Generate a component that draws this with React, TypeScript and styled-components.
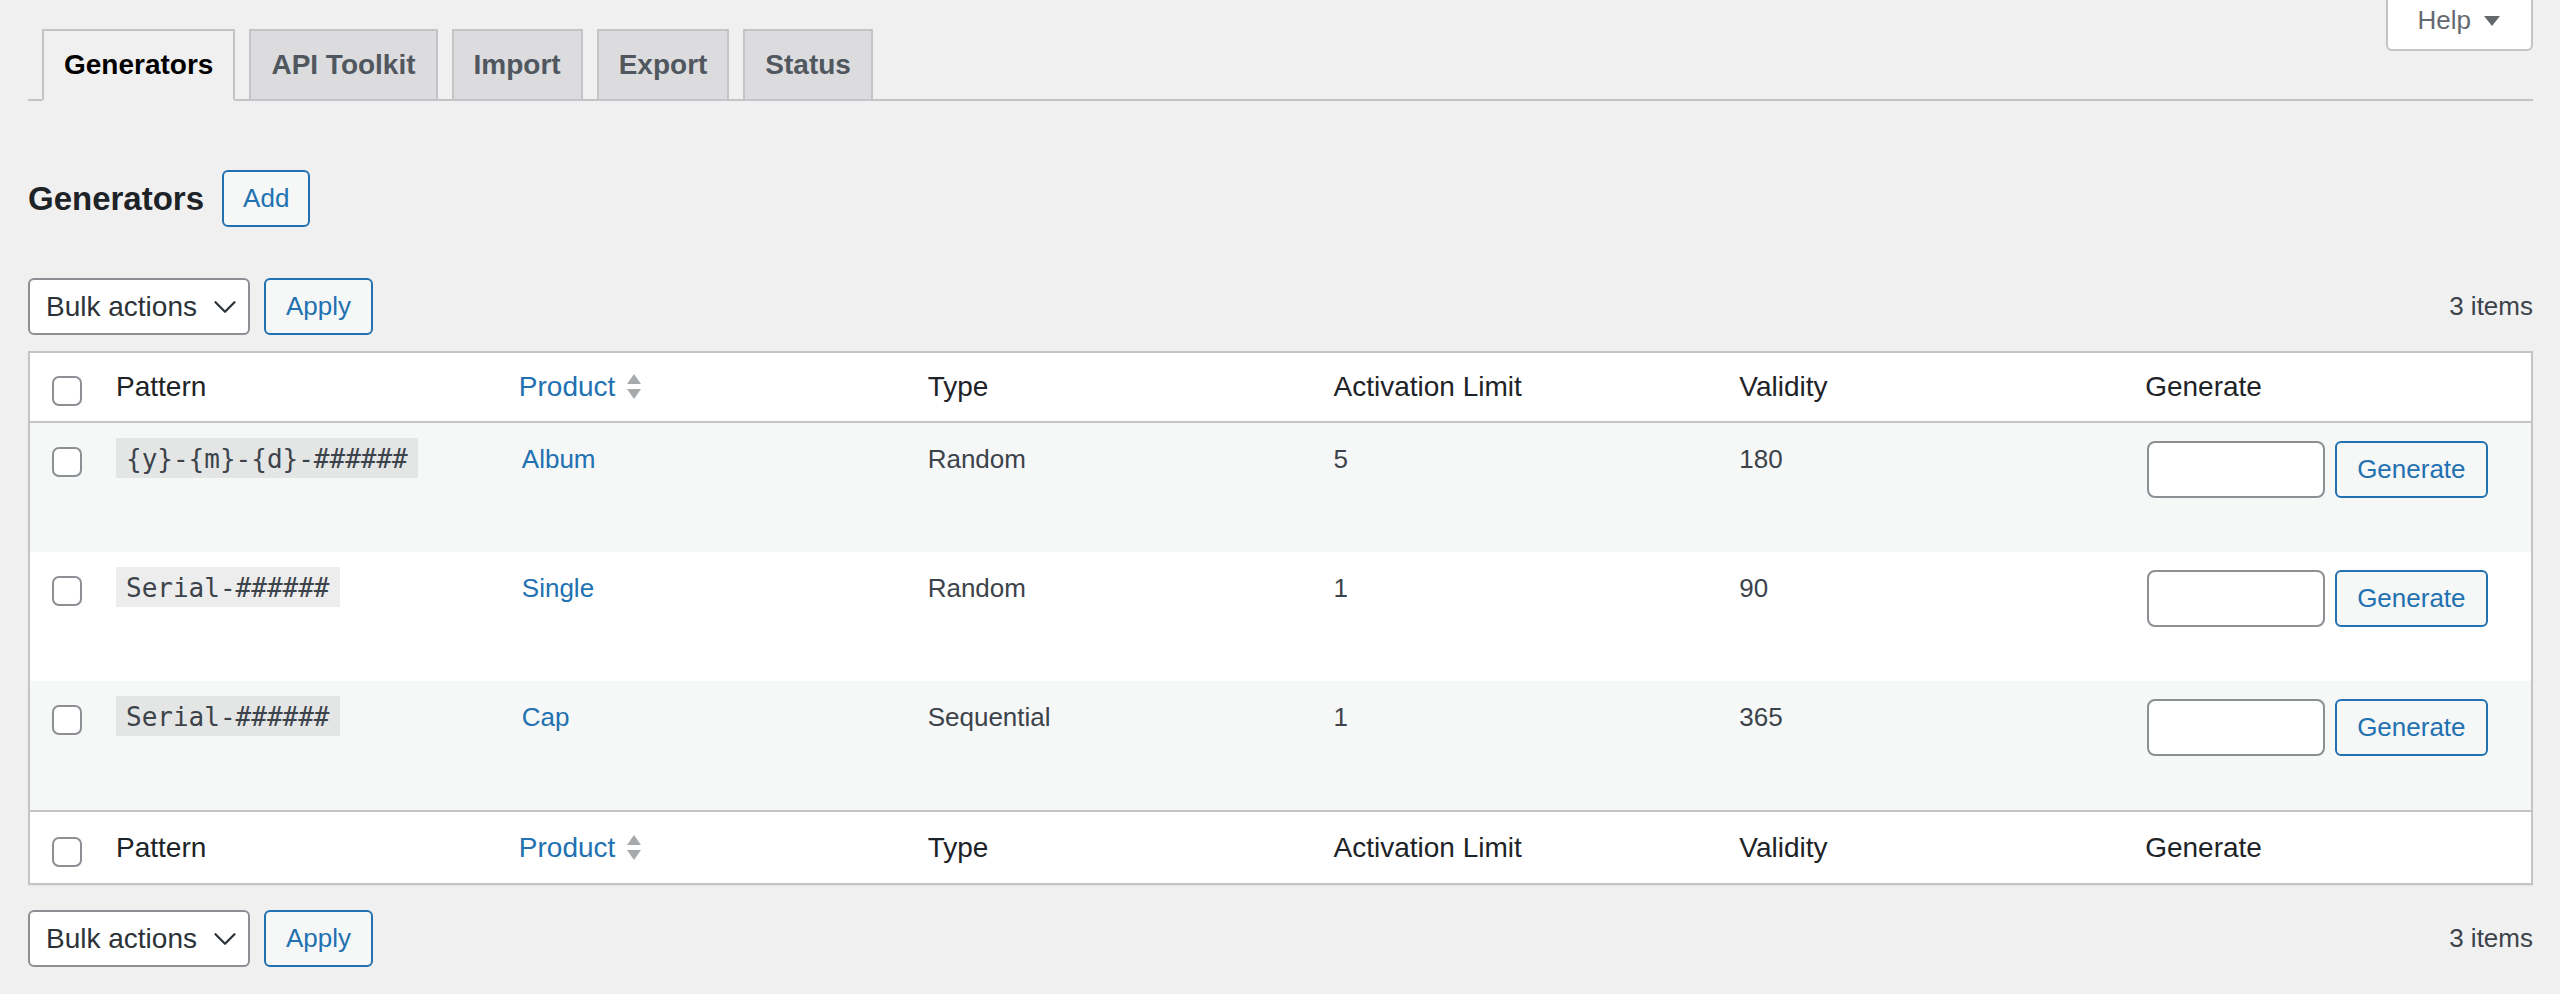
import React from 'react';
import styled, { createGlobalStyle } from 'styled-components';
import { ChevronDown } from 'lucide-react';

const GlobalStyle = createGlobalStyle`
  body {
    margin: 0;
    background: #f0f0f1;
    color: #3c434a;
    font-family: "Liberation Sans", Arial, sans-serif;
  }
`;

const Wrap = styled.div`
  padding: 0 27px 40px 28px;
`;

const HelpTab = styled.button`
  float: right;
  display: flex;
  align-items: center;
  gap: 12px;
  padding: 4px 30px 12px;
  line-height: 33px;
  background: #fff;
  border: 2px solid #c3c4c7;
  border-top: 0;
  border-radius: 0 0 6px 6px;
  color: #646970;
  font-family: inherit;
  font-size: 26px;
`;

const TabBar = styled.nav`
  padding-top: 29px;
  border-bottom: 2px solid #c3c4c7;
`;

const TabList = styled.div`
  display: flex;
  gap: 14px;
  padding-left: 14px;
  margin-bottom: -2px;
`;

const Tab = styled.a<{ $active?: boolean }>`
  display: block;
  padding: 10px 20px;
  line-height: 48px;
  font-size: 28px;
  font-weight: 600;
  border: 2px solid #c3c4c7;
  background: ${p => (p.$active ? '#f0f0f1' : '#dcdcde')};
  border-bottom-color: ${p => (p.$active ? '#f0f0f1' : '#c3c4c7')};
  color: ${p => (p.$active ? '#000' : '#50575e')};
  text-decoration: none;
`;

const TitleRow = styled.div`
  display: flex;
  align-items: center;
  gap: 18px;
  margin-top: 69px;
`;

const Title = styled.h2`
  margin: 0;
  font-size: 33px;
  font-weight: 600;
  color: #1d2327;
`;

const OutlineButton = styled.button<{ $pad?: number }>`
  height: 57px;
  padding: 0 ${p => p.$pad ?? 20}px;
  background: #f6f7f7;
  border: 2px solid #2271b1;
  border-radius: 6px;
  color: #2271b1;
  font-family: inherit;
  font-size: 26px;
  white-space: nowrap;
`;

const TableNav = styled.div<{ $gap: number }>`
  display: flex;
  align-items: center;
  justify-content: space-between;
  height: 57px;
  margin: ${p => p.$gap}px 0 16px;
`;

const NavActions = styled.div`
  display: flex;
  align-items: center;
  gap: 14px;
`;

const SelectBox = styled.div`
  box-sizing: border-box;
  display: flex;
  align-items: center;
  justify-content: space-between;
  width: 222px;
  height: 57px;
  padding: 0 4px 0 16px;
  background: #fff;
  border: 2px solid #8c8f94;
  border-radius: 6px;
  color: #2c3338;
  font-size: 28px;
`;

const Count = styled.span`
  font-size: 26px;
  color: #3c434a;
`;

const Table = styled.table`
  width: 100%;
  table-layout: fixed;
  border-collapse: separate;
  border-spacing: 0;
  background: #fff;
  border: 2px solid #c3c4c7;
  box-shadow: 0 1px 1px rgba(0, 0, 0, 0.04);
`;

const HeadCell = styled.th<{ $foot?: boolean }>`
  text-align: left;
  font-weight: 400;
  font-size: 28px;
  line-height: 38px;
  color: #1d2327;
  padding: ${p => (p.$foot ? '17px 20px 16px' : '15px 20px')};
  border-top: ${p => (p.$foot ? '2px solid #c3c4c7' : '0')};
  border-bottom: ${p => (p.$foot ? '0' : '2px solid #c3c4c7')};
  vertical-align: top;
`;

/* 66px wide in total: 22px of left padding plus the box */
const CheckHead = styled(HeadCell)`
  width: 44px;
  padding-left: 22px;
  padding-right: 0;
`;

const Row = styled.tr<{ $striped: boolean }>`
  background: ${p => (p.$striped ? '#f6f7f7' : '#fff')};
`;

const Cell = styled.td`
  padding: 16px 20px;
  font-size: 26px;
  line-height: 40px;
  color: #3c434a;
  vertical-align: top;
`;

const CheckCell = styled(Cell)`
  padding-left: 22px;
  padding-right: 0;
`;

const Checkbox = styled.span`
  display: block;
  box-sizing: border-box;
  width: 30px;
  height: 30px;
  margin-top: 8px;
  background: #fff;
  border: 2px solid #8c8f94;
  border-radius: 7px;
`;

const Code = styled.code`
  padding: 6px 10px 4px;
  background: rgba(0, 0, 0, 0.07);
  font-family: "DejaVu Sans Mono", "Liberation Mono", monospace;
  font-size: 26px;
  color: #3c434a;
`;

const Link = styled.a`
  color: #2271b1;
  text-decoration: none;
`;

const SortLink = styled.a`
  display: inline-flex;
  align-items: center;
  gap: 11px;
  margin-left: -3px;
  color: #2271b1;
  text-decoration: none;
`;

const GenerateForm = styled.div`
  display: flex;
  gap: 10px;
  margin: 2px 0 38px 2px;
`;

const AmountInput = styled.input`
  box-sizing: border-box;
  width: 178px;
  height: 57px;
  background: #fff;
  border: 2px solid #8c8f94;
  border-radius: 8px;
`;

const generators = [
  { pattern: '{y}-{m}-{d}-######', product: 'Album', type: 'Random', limit: '5', validity: '180' },
  { pattern: 'Serial-######', product: 'Single', type: 'Random', limit: '1', validity: '90' },
  { pattern: 'Serial-######', product: 'Cap', type: 'Sequential', limit: '1', validity: '365' },
];

const tabs = ['Generators', 'API Toolkit', 'Import', 'Export', 'Status'];

const SortArrows = () => (
  <svg width="16" height="28" viewBox="0 0 16 28">
    <polygon points="8,1 15,11 1,11" fill="#a7aaad" />
    <polygon points="1,16 15,16 8,26" fill="#a7aaad" />
  </svg>
);

const Caret = () => (
  <svg width="18" height="12" viewBox="0 0 18 12">
    <polygon points="1,1 17,1 9,11" fill="#646970" />
  </svg>
);

const HeaderRow = ({ foot }: { foot?: boolean }) => (
  <tr>
    <CheckHead $foot={foot}>
      <Checkbox />
    </CheckHead>
    <HeadCell $foot={foot}>Pattern</HeadCell>
    <HeadCell $foot={foot}>
      <SortLink>
        Product
        <SortArrows />
      </SortLink>
    </HeadCell>
    <HeadCell $foot={foot}>Type</HeadCell>
    <HeadCell $foot={foot}>Activation Limit</HeadCell>
    <HeadCell $foot={foot}>Validity</HeadCell>
    <HeadCell $foot={foot}>Generate</HeadCell>
  </tr>
);

const BulkNav = ({ gap }: { gap: number }) => (
  <TableNav $gap={gap}>
    <NavActions>
      <SelectBox>
        Bulk actions
        <ChevronDown size={38} strokeWidth={1.4} color="#2c3338" />
      </SelectBox>
      <OutlineButton>Apply</OutlineButton>
    </NavActions>
    <Count>3 items</Count>
  </TableNav>
);

export default function App() {
  return (
    <>
      <GlobalStyle />
      <Wrap>
        <HelpTab>
          Help
          <Caret />
        </HelpTab>
        <TabBar>
          <TabList>
            {tabs.map((t, i) => (
              <Tab key={t} $active={i === 0}>
                {t}
              </Tab>
            ))}
          </TabList>
        </TabBar>

        <TitleRow>
          <Title>Generators</Title>
          <OutlineButton $pad={19}>Add</OutlineButton>
        </TitleRow>

        <BulkNav gap={51} />

        <Table>
          <thead>
            <HeaderRow />
          </thead>
          <tbody>
            {generators.map((g, i) => (
              <Row key={i} $striped={i % 2 === 0}>
                <CheckCell>
                  <Checkbox />
                </CheckCell>
                <Cell>
                  <Code>{g.pattern}</Code>
                </Cell>
                <Cell>
                  <Link>{g.product}</Link>
                </Cell>
                <Cell>{g.type}</Cell>
                <Cell>{g.limit}</Cell>
                <Cell>{g.validity}</Cell>
                <Cell>
                  <GenerateForm>
                    <AmountInput type="text" />
                    <OutlineButton>Generate</OutlineButton>
                  </GenerateForm>
                </Cell>
              </Row>
            ))}
          </tbody>
          <tfoot>
            <HeaderRow foot />
          </tfoot>
        </Table>

        <BulkNav gap={25} />
      </Wrap>
    </>
  );
}
